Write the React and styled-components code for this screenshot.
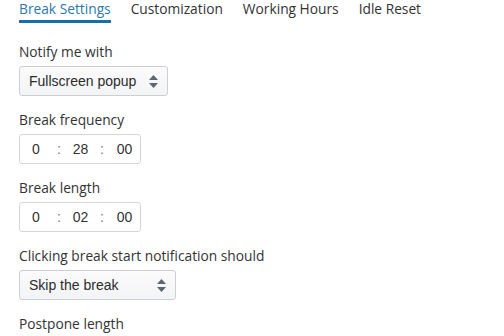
import React from "react";
import styled, { createGlobalStyle } from "styled-components";

const Global = createGlobalStyle`
  html, body { margin: 0; padding: 0; background: #fff; }
  body { font-family: "Open Sans", "Noto Sans", sans-serif; color: #333; }
`;

const Page = styled.div`
  padding: 0 19px;
  width: 504px;
  height: 336px;
  box-sizing: border-box;
  overflow: hidden;
`;

const Tabs = styled.nav`
  display: flex;
  gap: 20px;
  height: 23px;
`;

const Tab = styled.div`
  font-size: 13.75px;
  line-height: 17px;
  color: ${(p) => (p.$active ? "#2a7ab0" : "#333")};
  border-bottom: 3px solid ${(p) => (p.$active ? "#1870a8" : "transparent")};
  height: 20px;
  white-space: nowrap;
`;

const Content = styled.div`
  display: flex;
  flex-direction: column;
  padding-top: 20px;
`;

const Field = styled.div`
  display: flex;
  flex-direction: column;
  align-items: flex-start;
  height: 68px;
`;

const Label = styled.div`
  font-size: 13.75px;
  line-height: 18px;
  margin-bottom: 5px;
`;

const Select = styled.div`
  display: flex;
  align-items: center;
  justify-content: space-between;
  box-sizing: border-box;
  width: ${(p) => p.$w}px;
  height: 30px;
  padding: 0 9px 0 9px;
  border: 1px solid #ccd0d4;
  border-radius: 3px;
  background: linear-gradient(#fbfbfc, #f3f4f6);
  font-family: "Liberation Sans", Arial, sans-serif;
  font-size: 14px;
  color: #2b2b2b;
`;

const TimeBox = styled.div`
  display: flex;
  align-items: center;
  box-sizing: border-box;
  width: 122px;
  height: 30px;
  border: 1px solid #d6d6d6;
  border-radius: 3px;
  background: #fff;
  font-family: "Liberation Sans", Arial, sans-serif;
  font-size: 14px;
  color: #333;
`;

const Seg = styled.span`
  width: ${(p) => p.$w}px;
  text-align: center;
`;

const Colon = styled.span`
  width: 14px;
  text-align: center;
  color: #777;
`;

const Arrows = () => (
  <svg width="9" height="13" viewBox="0 0 9 13">
    <path d="M4.5 0 L9 5 L0 5 Z M0 8 L9 8 L4.5 13 Z" fill="#5b6670" />
  </svg>
);

const Time = ({ h, m, s }) => (
  <TimeBox>
    <Seg $w={32}>{h}</Seg>
    <Colon>:</Colon>
    <Seg $w={29}>{m}</Seg>
    <Colon>:</Colon>
    <Seg $w={31}>{s}</Seg>
  </TimeBox>
);

export default function App() {
  return (
    <Page>
      <Global />
      <Tabs>
        <Tab $active>Break Settings</Tab>
        <Tab>Customization</Tab>
        <Tab>Working Hours</Tab>
        <Tab>Idle Reset</Tab>
      </Tabs>
      <Content>
        <Field>
          <Label>Notify me with</Label>
          <Select $w={149}>
            Fullscreen popup
            <Arrows />
          </Select>
        </Field>
        <Field>
          <Label>Break frequency</Label>
          <Time h="0" m="28" s="00" />
        </Field>
        <Field>
          <Label>Break length</Label>
          <Time h="0" m="02" s="00" />
        </Field>
        <Field>
          <Label>Clicking break start notification should</Label>
          <Select $w={157}>
            Skip the break
            <Arrows />
          </Select>
        </Field>
        <Field>
          <Label>Postpone length</Label>
        </Field>
      </Content>
    </Page>
  );
}
